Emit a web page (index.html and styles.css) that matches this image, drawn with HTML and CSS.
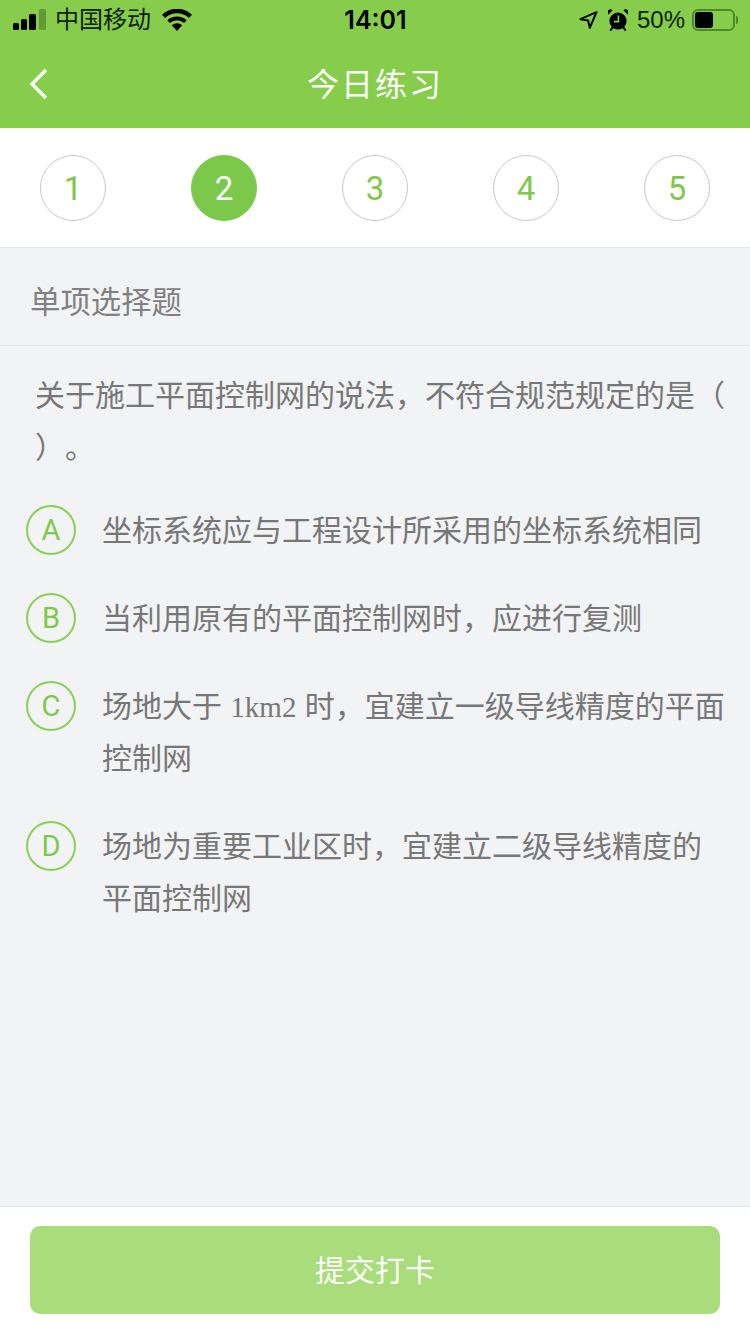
FILE: index.html
```html
<!DOCTYPE html>
<html lang="zh-CN">
<head>
    <meta charset="UTF-8">
    <meta name="viewport" content="width=device-width, initial-scale=1.0">
    <title>今日练习</title>
    <link rel="stylesheet" href="styles.css">
</head>
<body>
    <div class="page">
        <div class="top_wrap">
            <div class="status_bar">
                <div class="status_left">
                    <svg class="ico_signal" width="34" height="22" viewBox="0 0 34 22">
                        <rect x="0" y="14" width="6" height="7" rx="1.5" fill="#000"/>
                        <rect x="8" y="10" width="6" height="11" rx="1.5" fill="#000"/>
                        <rect x="16" y="5" width="7" height="16" rx="1.5" fill="#000"/>
                        <rect x="26" y="0" width="7" height="21" rx="1.5" fill="#000" opacity="0.25"/>
                    </svg>
                    <span class="carrier">中国移动</span>
                    <svg class="ico_wifi" width="30" height="22" viewBox="0 0 30 22">
                        <path d="M15 22 9.8 16.2a7.6 7.6 0 0 1 10.4 0Z" fill="#000"/>
                        <path d="M7.9 14.1a10.6 10.6 0 0 1 14.2 0l2.6-2.8a14.6 14.6 0 0 0-19.4 0Z" fill="#000"/>
                        <path d="M3.1 9A17.6 17.6 0 0 1 26.9 9L30 5.7A21.8 21.8 0 0 0 0 5.7Z" fill="#000"/>
                    </svg>
                </div>
                <div class="status_time">14:01</div>
                <div class="status_right">
                    <svg class="ico_arrow" width="19" height="18" viewBox="0 0 19 18">
                        <path d="M17.5 1.2 1.5 8.2l7.6 1.4L10.8 16.8Z" fill="none" stroke="#000" stroke-width="2" stroke-linejoin="round"/>
                    </svg>
                    <svg class="ico_alarm" width="20" height="22" viewBox="0 0 20 22">
                        <circle cx="10" cy="12" r="8.6" fill="#000"/>
                        <path d="M.4 5.6 4.6 1.2A3 3 0 0 0 .4 5.6ZM19.6 5.6 15.4 1.2A3 3 0 0 1 19.6 5.6Z" fill="#000"/>
                        <path d="M4.6 18.4 2.8 21M15.4 18.4l1.8 2.6" stroke="#000" stroke-width="2" stroke-linecap="round"/>
                        <path d="M10.4 6.5V12.6H6" fill="none" stroke="#86cd4b" stroke-width="1.6"/>
                    </svg>
                    <span class="battery_num">50%</span>
                    <div class="battery">
                        <div class="battery_body"><div class="battery_level"></div></div>
                        <div class="battery_cap"></div>
                    </div>
                </div>
            </div>
            <div class="title_bar">
                <a href="javascript:void(0)" class="back">
                    <svg width="20" height="32" viewBox="0 0 20 32">
                        <path d="M17 2 3 16l14 14" fill="none" stroke="#fff" stroke-width="3.4"/>
                    </svg>
                </a>
                <h1>今日练习</h1>
            </div>
        </div>

        <ul class="step_list">
            <li>1</li>
            <li class="on">2</li>
            <li>3</li>
            <li>4</li>
            <li>5</li>
        </ul>

        <div class="conts">
            <div class="q_type">单项选择题</div>
            <p class="q_title">关于施工平面控制网的说法，不符合规范规定的是（ ）。</p>
            <ul class="opt_list">
                <li>
                    <span class="opt_no">A</span>
                    <p>坐标系统应与工程设计所采用的坐标系统相同</p>
                </li>
                <li>
                    <span class="opt_no">B</span>
                    <p>当利用原有的平面控制网时，应进行复测</p>
                </li>
                <li>
                    <span class="opt_no">C</span>
                    <p>场地大于 <span class="num">1km2</span> 时，宜建立一级导线精度的平面控制网</p>
                </li>
                <li>
                    <span class="opt_no">D</span>
                    <p>场地为重要工业区时，宜建立二级导线精度的平面控制网</p>
                </li>
            </ul>
        </div>

        <div class="btn_wrap">
            <a href="javascript:void(0)" class="btn_submit">提交打卡</a>
        </div>
    </div>
</body>
</html>
```

FILE: styles.css
```css
* {
    margin: 0;
    padding: 0;
    box-sizing: border-box;
}

body {
    background-color: #f2f3f5;
    font-family: "Liberation Sans", "Noto Sans CJK SC", sans-serif;
    text-spacing-trim: space-all;
}

ul {
    list-style: none;
}

a {
    text-decoration: none;
}

.page {
    display: flex;
    flex-direction: column;
    width: 750px;
    height: 1334px;
    overflow: hidden;
}

/* top */
.top_wrap {
    height: 128px;
    background-color: #86cd4b;
}

.status_bar {
    display: grid;
    grid-template-columns: 1fr auto 1fr;
    align-items: center;
    height: 40px;
    padding: 0 12px 0 13px;
    color: #000;
}

.status_left,
.status_right {
    display: flex;
    align-items: center;
}

.status_right {
    justify-content: flex-end;
}

.carrier {
    margin-left: 8px;
    font-size: 24px;
    line-height: 40px;
    color: #10210a;
}

.ico_wifi {
    margin-left: 11px;
}

.status_time {
    font-family: Inter, "Liberation Sans", sans-serif;
    font-size: 25px;
    font-weight: 600;
}

.ico_alarm {
    margin-left: 10px;
}

.battery_num {
    margin-left: 9px;
    font-size: 24px;
    color: #10210a;
}

.battery {
    display: flex;
    align-items: center;
    margin-left: 7px;
}

.battery_body {
    width: 43px;
    height: 22px;
    padding: 1px;
    border: 2px solid #4b8a2a;
    border-radius: 6px;
}

.battery_level {
    width: 18px;
    height: 100%;
    background-color: #000;
    border-radius: 3px;
}

.battery_cap {
    width: 2px;
    height: 8px;
    margin-left: 1px;
    background-color: #4b8a2a;
    border-radius: 0 2px 2px 0;
}

.title_bar {
    display: flex;
    align-items: center;
    justify-content: center;
    position: relative;
    height: 88px;
    padding-bottom: 4px;
}

.title_bar h1 {
    font-size: 32px;
    font-weight: 400;
    color: #fff;
    letter-spacing: 2px;
}

.back {
    position: absolute;
    left: 29px;
    top: 28px;
    line-height: 0;
}

/* step */
.step_list {
    display: flex;
    justify-content: space-between;
    padding: 27px 40px 26px;
    background-color: #fff;
    border-bottom: 1px solid #e6e7e9;
}

.step_list li {
    display: flex;
    align-items: center;
    justify-content: center;
    width: 66px;
    height: 66px;
    border: 1px solid #c8c8c8;
    border-radius: 100%;
    color: #7fc84a;
    font-family: Roboto, "Liberation Sans", sans-serif;
    font-size: 33px;
    font-weight: 400;
}

.step_list li.on {
    background-color: #7cc84a;
    border-color: #7cc84a;
    color: #fff;
}

/* question */
.conts {
    flex: 1;
}

.q_type {
    height: 98px;
    padding-left: 30px;
    border-bottom: 1px solid #e6e7e9;
    color: #808080;
    font-size: 30.4px;
    line-height: 108px;
}

.q_title {
    padding: 24px 25px 0 35px;
    color: #777;
    font-size: 30px;
    line-height: 52px;
}

.opt_list {
    padding: 31px 20px 0 26px;
}

.opt_list li {
    display: flex;
    padding-bottom: 36px;
}

.opt_no {
    flex-shrink: 0;
    display: flex;
    align-items: center;
    justify-content: center;
    width: 50px;
    height: 50px;
    margin-right: 26px;
    border: 2px solid #8ccf56;
    border-radius: 100%;
    color: #7fc84a;
    font-family: Roboto, "Liberation Sans", sans-serif;
    font-size: 29px;
    font-weight: 400;
}

.opt_list p {
    color: #777;
    font-size: 30px;
    line-height: 52px;
}

.opt_list .num {
    font-family: "Liberation Serif", serif;
    font-size: 29px;
}

/* bottom */
.btn_wrap {
    height: 128px;
    padding: 19px 30px;
    background-color: #fff;
    border-top: 1px solid #e6e7e9;
}

.btn_submit {
    display: block;
    height: 88px;
    background-color: #a9dc7a;
    border-radius: 10px;
    color: #fff;
    font-size: 30px;
    line-height: 89px;
    text-align: center;
}
```
